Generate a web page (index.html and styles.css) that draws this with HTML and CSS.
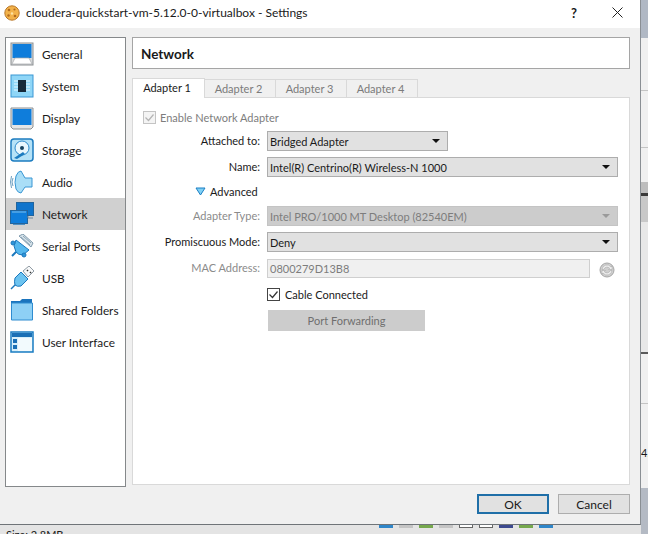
FILE: index.html
```html
<!DOCTYPE html>
<html lang="en">
<head>
<meta charset="utf-8">
<title>Settings</title>
<link rel="stylesheet" href="styles.css">
</head>
<body>
<div class="desktop">
  <main class="window">
    <header class="titlebar">
      <svg class="app-icon" width="16" height="16" viewBox="0 0 16 16"><circle cx="8" cy="8" r="7.2" fill="#f2b24a" stroke="#b9782a"/><circle cx="5" cy="5" r="1.3" fill="#b36a1c"/><circle cx="10.5" cy="4.5" r="1.1" fill="#b36a1c"/><circle cx="8" cy="8.5" r="1.2" fill="#fbe3a6"/><circle cx="4.5" cy="10.5" r="1.2" fill="#b36a1c"/><circle cx="11" cy="11" r="1.3" fill="#b36a1c"/></svg>
      <span class="title">cloudera-quickstart-vm-5.12.0-0-virtualbox - Settings</span>
      <span class="help">?</span>
      <svg class="close" width="11" height="11" viewBox="0 0 11 11"><path d="M.5.5l10 10M10.5.5l-10 10" stroke="#222" fill="none"/></svg>
    </header>
    <div class="content">
      <nav class="sidebar">
        <div class="nav-item"><svg class="nav-icon" viewBox="0 0 24 24"><rect x="1" y="1" width="22" height="22" fill="#d8dadb" stroke="#8b8f92"/><rect x="2.500" y="2" width="19" height="14" fill="#0f7ddb"/><path d="M5 16h14l3 6H2z" fill="#fff" stroke="#a8abad" stroke-width=".7"/></svg><span>General</span></div>
        <div class="nav-item"><svg class="nav-icon" viewBox="0 0 24 24"><rect x="1" y="1" width="22" height="22" fill="#8fd6f7" stroke="#3a97d4"/><path d="M4 7h4M4 10h4M4 13h4M4 16h4M16 7h4M16 10h4M16 13h4M16 16h4" stroke="#e8f8ff"/><rect x="8" y="6" width="8" height="12" fill="#172a3a"/></svg><span>System</span></div>
        <div class="nav-item"><svg class="nav-icon" viewBox="0 0 24 24"><path d="M1 2h22v19l-2 2H3l-2-2z" fill="#e4e5e6" stroke="#8b8f92"/><rect x="2.500" y="3" width="19" height="16" fill="#0f7ddb"/></svg><span>Display</span></div>
        <div class="nav-item"><svg class="nav-icon" viewBox="0 0 24 24"><rect x="1" y="1" width="22" height="22" rx="3" fill="#b5e2f7" stroke="#1c7cc0" stroke-width="1.500"/><circle cx="12" cy="10" r="7" fill="#e9f7fd" stroke="#2c8acb"/><circle cx="12" cy="10" r="2" fill="#17435f"/><path d="M4 20l9-6 2 2-8 5z" fill="#1c7cc0"/></svg><span>Storage</span></div>
        <div class="nav-item"><svg class="nav-icon" viewBox="0 0 24 24"><path d="M3 8q-2 4 0 8M1.500 6q-2 6 0 12" fill="none" stroke="#6d9fc0"/><path d="M11 1L15 8h7v9h-7l-4 6q-3 0-5-4-2-7 0-13 2-5 5-5z" fill="#a9def7" stroke="#3a97d4"/></svg><span>Audio</span></div>
        <div class="nav-item is-active"><svg class="nav-icon" viewBox="0 0 24 24"><rect x="6.500" y=".5" width="17" height="13" fill="#0f74cc" stroke="#22649c"/><rect x=".5" y="8.500" width="17" height="13" fill="#0f7ddb" stroke="#22649c"/><path d="M2 10h14" stroke="#7cc0ee"/><path d="M18 14v2h5" fill="none" stroke="#6f8aa0"/><path d="M3 22.500h12" stroke="#4f8fc2"/></svg><span>Network</span></div>
        <div class="nav-item"><svg class="nav-icon" viewBox="0 0 24 24"><path d="M6 6l13 10-6 5q-5 0-7-3l-2-6z" fill="#55b8ee" stroke="#1b78bd"/><path d="M9 2l4-2 10 9-2 4z" fill="#d7e3ea" stroke="#7f9aad"/><path d="M11 3l9 8M13 2l8 7" stroke="#8aa4b6"/><circle cx="3" cy="9" r="2" fill="#2d95d8" stroke="#1b78bd"/><circle cx="14" cy="21" r="2" fill="#2d95d8" stroke="#1b78bd"/><path d="M6 18l-4 4" stroke="#1b78bd" stroke-width="2"/></svg><span>Serial Ports</span></div>
        <div class="nav-item"><svg class="nav-icon" viewBox="0 0 24 24"><path d="M11 6l7 7-7 7q-4 1-6-1-1-3 0-7z" fill="#6cc3f0" stroke="#1b78bd"/><path d="M13 5l6-5 5 5-6 6z" fill="#f7f8f9" stroke="#73828c" stroke-width=".8"/><path d="M17 4l1 1M20 6l1 1" stroke="#333" stroke-width="1.500"/><path d="M5 19l-4 4" stroke="#1b78bd" stroke-width="1.500"/></svg><span>USB</span></div>
        <div class="nav-item"><svg class="nav-icon" viewBox="0 0 24 24"><path d="M1 3h9l2-2h10v21H1z" fill="#1b74bd"/><path d="M1.500 5h21v17h-21z" fill="#8ed0f5" stroke="#2f8cd0"/></svg><span>Shared Folders</span></div>
        <div class="nav-item"><svg class="nav-icon" viewBox="0 0 24 24"><rect x="1" y="2" width="22" height="20" fill="#d7effa" stroke="#1a7cc2" stroke-width="1.500"/><rect x="2" y="3" width="20" height="4" fill="#1a6fb5"/><rect x="3" y="9" width="4" height="4" fill="#1a6fb5"/><rect x="3" y="15" width="4" height="4" fill="#1a6fb5"/><rect x="8" y="8" width="14" height="13" fill="#f2fafd"/></svg><span>User Interface</span></div>
      </nav>
      <section class="panel">
        <h1 class="panel-title">Network</h1>
        <div class="tabs">
          <div class="tab is-current">Adapter 1</div>
          <div class="tab">Adapter 2</div>
          <div class="tab">Adapter 3</div>
          <div class="tab">Adapter 4</div>
        </div>
        <div class="pane">
          <div class="check-row is-disabled enable-row">
            <svg class="check" viewBox="0 0 13 13"><rect x=".5" y=".5" width="12" height="12" fill="#f4f4f4" stroke="#c4c4c4"/><path d="M2.500 6.500l3 3 5-6" fill="none" stroke="#b4b4b4" stroke-width="1.200"/></svg>
            <span>Enable Network Adapter</span>
          </div>
          <div class="form">
            <label class="label row-attached">Attached to:</label>
            <div class="combo combo-short row-attached"><span>Bridged Adapter</span><i class="arrow"></i></div>
            <label class="label row-name">Name:</label>
            <div class="combo row-name"><span>Intel(R) Centrino(R) Wireless-N 1000</span><i class="arrow"></i></div>
            <div class="advanced"><svg width="11" height="9" viewBox="0 0 11 9"><path d="M1 1h9L5.500 8z" fill="#7fd0f5" stroke="#1b7fc4"/></svg><span>Advanced</span></div>
            <label class="label is-muted row-type">Adapter Type:</label>
            <div class="combo is-off row-type"><span>Intel PRO/1000 MT Desktop (82540EM)</span><i class="arrow"></i></div>
            <label class="label row-mode">Promiscuous Mode:</label>
            <div class="combo row-mode"><span>Deny</span><i class="arrow"></i></div>
            <label class="label is-muted row-mac">MAC Address:</label>
            <div class="mac-row">
              <div class="mac-field">0800279D13B8</div>
              <svg class="refresh" width="16" height="16" viewBox="0 0 16 16"><circle cx="8" cy="8" r="7" fill="#cfcfcf" stroke="#a6a6a6"/><path d="M3 7.500a5 5 0 0 1 9-2.500l1-1v3.500H9.500l1.200-1.200A3.500 3.500 0 0 0 4.700 7.500zM13 8.500a5 5 0 0 1-9 2.500l-1 1V8.500h3.500L5.300 9.700a3.500 3.500 0 0 0 6-1.200z" fill="#efefef" stroke="#a0a0a0" stroke-width=".5"/></svg>
            </div>
            <div class="check-row cable-row">
              <svg class="check" viewBox="0 0 13 13"><rect x=".5" y=".5" width="12" height="12" fill="#fff" stroke="#444"/><path d="M2.500 6.500l3 3 5-6" fill="none" stroke="#333" stroke-width="1.200"/></svg>
              <span>Cable Connected</span>
            </div>
            <div class="port-button">Port Forwarding</div>
          </div>
        </div>
      </section>
    </div>
    <footer class="actions">
      <button class="btn btn-default" type="button">OK</button>
      <button class="btn" type="button">Cancel</button>
    </footer>
  </main>
  <aside class="backdrop-right"><span>4.</span></aside>
  <div class="backdrop-bottom">
    <span class="size-text">Size: 2.8MB</span>
    <div class="tray">
      <i class="tray-icon tray-blue"></i><i class="tray-icon tray-grey"></i><i class="tray-icon tray-green"></i><i class="tray-icon tray-grey"></i><i class="tray-icon tray-outline"></i><i class="tray-icon tray-outline"></i><i class="tray-icon tray-navy"></i><i class="tray-icon tray-green"></i><i class="tray-icon tray-blue"></i>
    </div>
  </div>
</div>
</body>
</html>
```
FILE: styles.css
```css
* { box-sizing: border-box; }
html, body { margin: 0; padding: 0; background: #f0f0f0; }
body { font: 12px "Lato", "Open Sans", sans-serif; color: #1a1a1a; }
.desktop {
  width: 648px; height: 534px; overflow: hidden;
  display: grid; grid-template-columns: 641px 7px; grid-template-rows: 525px 9px;
}
.window { display: flex; flex-direction: column; background: #f0f0f0; border-right: 1px solid #8a8f94; border-bottom: 1px solid #6f7478; min-height: 0; }
.titlebar { height: 28px; background: #fff; display: flex; align-items: center; padding: 0 17px 3px 4px; flex: none; }
.app-icon { flex: none; }
.title { margin-left: 6px; font-size: 12px; flex: 1; }
.help { font-size: 13px; font-weight: 700; margin-right: 35px; }
.content { display: flex; padding: 9px 10px 0 5px; gap: 6px; height: 458px; flex: none; }
.sidebar { width: 121px; height: 450px; background: #fff; border: 1px solid #85888a; flex: none; font-size: 11.8px; }
.nav-item { height: 32px; display: flex; align-items: center; gap: 8px; padding-left: 4px; }
.nav-item.is-active { background: #d0d0d0; }
.nav-icon { width: 24px; height: 24px; flex: none; }
.panel { flex: 1; min-width: 0; display: flex; flex-direction: column; font-size: 11px; }
.panel-title { margin: 0; height: 32px; background: #fff; border: 1px solid #a5a5a5; font-size: 13.500px; font-weight: 700; line-height: 32px; padding-left: 8px; flex: none; }
.tabs { display: flex; margin-top: 9px; height: 19px; align-items: flex-end; flex: none; }
.tab { width: 71px; height: 18px; background: #f0f0f0; border: 1px solid #d9d9d9; border-bottom: 0; border-left: 0; color: #7b7b7b; line-height: 17px; text-align: center; padding-right: 3px; }
.tab.is-current { width: 73px; height: 20px; background: #fff; color: #1a1a1a; border-left: 1px solid #d9d9d9; position: relative; z-index: 1; margin-bottom: -1px; }
.pane { width: 498px; height: 388px; background: #fff; border: 1px solid #d9d9d9; padding: 10px 10px 0 10px; flex: none; }
.check-row { display: flex; align-items: center; gap: 4px; height: 18px; }
.check-row.is-disabled { color: #7d7d7d; }
.check { width: 13px; height: 13px; flex: none; }
.enable-row { margin-bottom: 5px; }
.form { display: grid; grid-template-columns: 118px 351px; column-gap: 7px; margin-left: -1px; align-items: start; }
.label { grid-column: 1; text-align: right; height: 20px; line-height: 20px; margin-bottom: 6px; }
.label.is-muted { color: #8b8b8b; }
.combo { grid-column: 2; height: 20px; background: #e1e1e1; border: 1px solid #adadad; display: flex; align-items: center; justify-content: space-between; padding: 0 7px 0 2px; margin-bottom: 6px; }
.combo-short { width: 181px; }
.combo.is-off { background: #cccccc; border-color: #c4c4c4; color: #7d7d7d; }
.arrow { width: 0; height: 0; border-left: 4px solid transparent; border-right: 4px solid transparent; border-top: 4px solid #111; }
.is-off .arrow { border-top-color: #9a9a9a; }
.advanced { grid-column: 1 / span 2; height: 18px; display: flex; align-items: center; gap: 4px; padding: 0 0 2px 53px; margin-bottom: 5px; }
.mac-row { grid-column: 2; display: flex; align-items: flex-end; gap: 9px; height: 20px; margin-bottom: 9px; }
.mac-field { width: 323px; height: 19px; background: #f0f0f0; border: 1px solid #cfcfcf; color: #7d7d7d; line-height: 17px; padding-left: 2px; }
.refresh { flex: none; }
.cable-row { grid-column: 2; height: 15px; margin-bottom: 8px; gap: 5px; }
.port-button { grid-column: 2; width: 157px; height: 21px; margin-left: 1px; background: #cccccc; color: #6f6f6f; text-align: center; line-height: 21px; }
.actions { display: flex; justify-content: flex-end; gap: 9px; padding: 8px 10px 0 0; }
.btn { width: 72px; height: 20px; font: 12px "Lato", "Open Sans", sans-serif; color: #1a1a1a; background: #e1e1e1; border: 1px solid #adadad; padding: 0; }
.btn-default { border: 2px solid #1f6fa8; }
.backdrop-right {
  grid-row: 1 / span 2; grid-column: 2; font-size: 11px; padding-top: 446px; overflow: hidden; white-space: nowrap;
  background: linear-gradient(#b0b8c4 0 38px, #f0f0f0 38px 90px, #c4c4c4 90px 91px, #f0f0f0 91px 147px, #c4c4c4 147px 148px, #f0f0f0 148px 182px, #bdbdbd 182px 193px, #3a3a3a 193px 196px, #c8c8c8 196px 222px, #e8e8e8 222px 352px, #5a5a5a 352px 354px, #f0f0f0 354px 403px, #c4c4c4 403px 404px, #f0f0f0 404px 488px, #b4bac4 488px);
}
.backdrop-bottom { position: relative; background: #e4e4e4; font-size: 11px; overflow: hidden; }
.size-text { position: absolute; left: 6px; top: 3px; }
.tray { display: flex; gap: 6px; padding-left: 379px; }
.tray-icon { display: block; width: 14px; height: 3px; }
.tray-blue { background: #2f86c9; }
.tray-grey { background: #c4c4c4; }
.tray-green { background: #76a84d; }
.tray-outline { background: #fff; border: 1px solid #666; border-top: 0; }
.tray-navy { background: #3d4a8f; }
```
